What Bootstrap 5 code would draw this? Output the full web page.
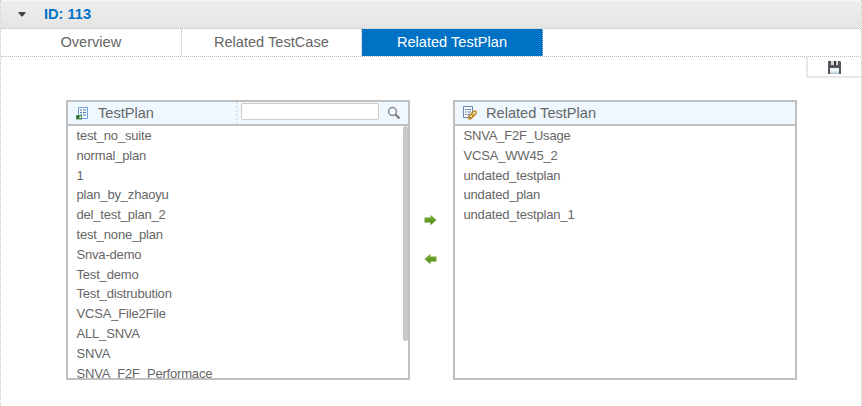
<!DOCTYPE html>
<html lang="en">
<head>
<meta charset="utf-8">
<title>ID: 113</title>
<meta name="viewport" content="width=device-width, initial-scale=1">
<link href="https://cdn.jsdelivr.net/npm/bootstrap@5.3.0/dist/css/bootstrap.min.css" rel="stylesheet">
<style>
body{font-family:"Liberation Sans",Arial,sans-serif;color:#666;background:#fff;font-size:13px}
.page{height:406px;border:1px dotted #c4c4c4;border-width:0 1px}
.title-bar{height:29px;margin-top:0;border-top:1px solid #f8f8f8;border-bottom:1px dotted #bbb;background:linear-gradient(#eee,#e5e5e5);padding-left:17px}
.title-bar h1{font-size:14.6px;font-weight:bold;color:#0072c6;margin:0 0 0 18px;line-height:27px}
.tabs{height:28px;border-bottom:1px dotted #bbb}
.tabs .nav-link{width:180.6px;height:27px;padding:0;line-height:26px;font-size:14.6px;color:#666;text-align:center;border-right:1px dotted #bbb;border-radius:0}
.tabs .nav-link.active{background:#0072c6;color:#fff}
.toolbox{width:55px;height:21px;border:solid #e8e8e8;border-width:0 0 2px 2px}
.work{padding:22px 0 0 65px}
.panel{width:344px;height:280px;border:2px solid #c0c0c0}
.panel-head{height:24px;flex:none;border-bottom:2px solid #c0c0c0;background:#eff7ff;padding-left:8px;font-size:14.6px}
.panel-head .caption{margin-left:9px;line-height:22px}
.search{width:172px;border-left:2px dotted #dde3e8;padding-left:3px}
.search input{width:138px;height:17px;border:1px solid #ccc;border-radius:2px;padding:0 4px;margin-top:1px;font-size:12px}
.items{line-height:19.8px;padding-left:8.5px;margin:0;letter-spacing:-.18px}
.thumb{width:5px;height:215px;border-radius:3px;background:#c8c8c8}
.movers{width:43px;padding:114px 2px 0 0;gap:27px}
svg{display:block;flex:none}
</style>
</head>
<body>
<div class="page overflow-hidden">
  <header class="title-bar d-flex align-items-center">
    <svg width="8" height="5" viewBox="0 0 8 5"><path d="M.5 0h7v1L4.5 4.5h-1L.5 1z" fill="#444"/></svg>
    <h1>ID: 113</h1>
  </header>
  <nav class="tabs nav">
    <a class="nav-link" href="#">Overview</a>
    <a class="nav-link" href="#">Related TestCase</a>
    <a class="nav-link active" href="#">Related TestPlan</a>
  </nav>
  <div class="toolbox ms-auto d-flex justify-content-center">
    <svg class="mt-1" width="13" height="13" viewBox="0 0 13 13"><path d="M0 0h12l1 1v12H0z" fill="#55575c"/><path d="M3 0h7v4H3z" fill="#d8dadd"/><path d="M6 0h2v4H6z" fill="#34363b"/><path d="M2 7h9v5.500H2z" fill="#f2f8fa"/><path d="M2 10.500h9v2H2z" fill="#c5dfe3"/></svg>
  </div>
  <main class="work d-flex">
    <section class="panel d-flex flex-column overflow-hidden">
      <div class="panel-head d-flex align-items-center">
        <svg width="13" height="14" viewBox="0 0 13 14"><path d="M2.500 1.500h9v11h-9z" fill="#f5faff" stroke="#6ba0e2"/><path d="M4 4h2m1 0h3M4 6.500h2m1 0h3M4 9h2m1 0h3" stroke="#5079b8"/><path d="M0 9h6v4.500H0z" fill="#568b55"/><path d="M1 11h2" stroke="#176817" stroke-width="2"/><path d="M3.500 10h1.500v2H3.500z" fill="#d9eed6"/></svg>
        <span class="caption">TestPlan</span>
        <div class="search ms-auto d-flex h-100">
          <input type="text" class="form-control" aria-label="Search">
          <svg class="ms-2 mt-1" width="14" height="14" viewBox="0 0 14 14"><circle cx="5.500" cy="5.500" r="3.900" fill="#f7fbff" stroke="#8b8b8b" stroke-width="1.500"/><path d="M8.500 8.500l4 4" stroke="#777" stroke-width="2.200"/></svg>
        </div>
      </div>
      <div class="d-flex justify-content-between overflow-hidden">
        <ul class="items list-unstyled">
          <li>test_no_suite</li><li>normal_plan</li><li>1</li><li>plan_by_zhaoyu</li><li>del_test_plan_2</li><li>test_none_plan</li><li>Snva-demo</li><li>Test_demo</li><li>Test_distrubution</li><li>VCSA_File2File</li><li>ALL_SNVA</li><li>SNVA</li><li>SNVA_F2F_Performace</li>
        </ul>
        <div class="thumb"></div>
      </div>
    </section>
    <div class="movers d-flex flex-column align-items-center">
      <svg width="13" height="12" viewBox="0 0 13 12"><defs><linearGradient id="leaf" x2="0" y2="1"><stop stop-color="#86ba40"/><stop offset="1" stop-color="#467f0e"/></linearGradient></defs><path d="M.5 3.500h6V.8L12.500 6l-6 5.200V8.500h-6z" fill="url(#leaf)"/></svg>
      <svg width="13" height="12" viewBox="0 0 13 12"><path d="M12.500 3.500h-6V.8L.5 6l6 5.200V8.500h6z" fill="url(#leaf)"/></svg>
    </div>
    <section class="panel d-flex flex-column overflow-hidden">
      <div class="panel-head d-flex align-items-center">
        <svg width="14" height="14" viewBox="0 0 14 14"><path d="M.5 .5h9v11h-9z" fill="#f5faff" stroke="#6682ad"/><path d="M2 3.500h1.500m1 0H8M2 6h1.500m1 0H8M2 8.500h1.500m1 0H7" stroke="#55759f"/><g fill="none" stroke="#c28b1d" stroke-width="1.500"><ellipse cx="10.800" cy="7.500" rx="2.800" ry="1.600" transform="rotate(-45 10.800 7.500)"/><ellipse cx="7.800" cy="10.500" rx="2.800" ry="1.600" transform="rotate(-45 7.800 10.500)"/></g><path d="M8 10l2.500-2.500" stroke="#f1cf69"/></svg>
        <span class="caption">Related TestPlan</span>
      </div>
      <ul class="items list-unstyled">
        <li>SNVA_F2F_Usage</li><li>VCSA_WW45_2</li><li>undated_testplan</li><li>undated_plan</li><li>undated_testplan_1</li>
      </ul>
    </section>
  </main>
</div>
<script src="https://cdn.jsdelivr.net/npm/bootstrap@5.3.0/dist/js/bootstrap.bundle.min.js"></script>
</body>
</html>
